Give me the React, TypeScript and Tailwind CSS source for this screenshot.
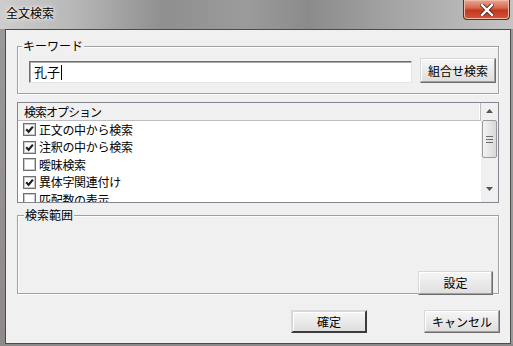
import React from 'react';

const font = { fontFamily: '"Noto Sans CJK JP", "Liberation Sans", sans-serif' };

const options = [
  { label: '正文の中から検索', checked: true },
  { label: '注釈の中から検索', checked: true },
  { label: '曖昧検索', checked: false },
  { label: '異体字関連付け', checked: true },
  { label: '匹配数の表示', checked: false },
];

function Check({ checked }: { checked: boolean }) {
  return (
    <div className="flex h-[13px] w-[13px] shrink-0 items-center justify-center border border-[#6f6f6f] bg-white shadow-[inset_0_0_0_1px_#c8c8c8]">
      {checked && (
        <svg width="9" height="9" viewBox="0 0 9 9">
          <path d="M1.2 4.3 L3.6 6.8 L7.9 1.6" fill="none" stroke="#222" strokeWidth="2.2" />
        </svg>
      )}
    </div>
  );
}

function Button({ label, wide = 'w-[76px]', strong = false, extra = '' }: { label: string; wide?: string; strong?: boolean; extra?: string }) {
  return (
    <div
      className={`flex h-[23px] ${wide} ${extra} items-center justify-center bg-gradient-to-b from-[#f6f6f6] to-[#dedede] text-[12px] text-black ${
        strong ? 'border-2 border-[#3c3c3c] border-t-[#d8d8d8] border-l-[#d8d8d8] shadow-[inset_1px_1px_0_#fff]' : 'border border-[#d8d8d8] border-r-[#6d6d6d] border-b-[#6d6d6d] shadow-[inset_-1px_-1px_0_#a0a0a0,inset_1px_1px_0_#fff]'
      }`}
    >
      {label}
    </div>
  );
}

export default function App() {
  return (
    <div className="flex h-[346px] w-[513px] flex-col bg-[#9c9a9a]" style={font}>
      {/* title bar */}
      <div className="relative flex h-[29px] shrink-0 items-start bg-[linear-gradient(to_right,#cdcdcd_0%,#b8b8b8_14%,#8f8f8f_32%,#9b9b9b_48%,#8b8b8b_60%,#a6a6a6_78%,#c4c4c4_100%)]">
        <span className="ml-[6px] mt-[5px] text-[12px] leading-[16px] text-black [text-shadow:0_0_6px_#fff,0_0_3px_#fff]">全文検索</span>
        <div className="ml-auto mr-[3px] flex h-[20px] w-[47px] items-center justify-center rounded-b-[4px] border border-t-0 border-[#5c2b22] bg-[linear-gradient(to_bottom,#e9a791_0%,#d66b52_40%,#c2381f_55%,#d3573b_100%)] shadow-[inset_0_0_0_1px_#f0b9a8]">
          <svg width="14" height="12" viewBox="0 0 14 12">
            <path d="M2 1 L12 11 M12 1 L2 11" stroke="#5a2a20" strokeWidth="4.2" strokeLinecap="square" />
            <path d="M2 1 L12 11 M12 1 L2 11" stroke="#fff" strokeWidth="2.4" strokeLinecap="square" />
          </svg>
        </div>
      </div>

      <div className="flex h-[315px] shrink-0">
        <div className="w-[5px] shrink-0 bg-gradient-to-b from-[#9a9898] to-[#8f8a8a]" />
        {/* client */}
        <div className="flex w-[506px] shrink-0 flex-col border border-[#4b4b4b] bg-[#f0f0f0] pl-[11px] pt-[16px]">
          {/* keyword group */}
          <div className="relative flex h-[48px] w-[482px] items-start border border-[#a0a0a0] shadow-[inset_1px_1px_0_#fff,1px_1px_0_#fff] pl-[11px] pt-[11px]">
            <span className="absolute -top-[9px] left-[4px] bg-[#f0f0f0] px-[1px] text-[12px] leading-[16px] text-black">キーワード</span>
            <div className="mt-[3px] flex h-[22px] w-[383px] items-center border border-[#6e6e6e] border-b-[#e3e3e3] border-r-[#e3e3e3] bg-white pl-[4px] shadow-[inset_1px_1px_0_#a9a9a9] text-[13px] text-black">
              孔子<span className="ml-[1px] h-[15px] w-[1px] bg-black" />
            </div>
            <Button label="組合せ検索" wide="w-[76px]" extra="ml-[8px] h-[25px]" />
          </div>

          {/* options list */}
          <div className="mt-[8px] flex h-[101px] w-[482px] border border-[#828790] bg-white">
            <div className="flex flex-1 flex-col overflow-hidden">
              <div className="flex h-[18px] shrink-0 items-center border-b border-r border-[#bdbdbd] bg-[#f0f0f0] pl-[6px] text-[12px] tracking-[-1px] text-black shadow-[inset_-1px_0_0_#fff]">
                検索オプション
              </div>
              {options.map((o) => (
                <div key={o.label} className="flex h-[17.5px] shrink-0 items-center gap-[3px] pl-[5px] text-[12px] tracking-[-0.3px] text-black">
                  <Check checked={o.checked} />
                  <span className="leading-[14px]">{o.label}</span>
                </div>
              ))}
            </div>
            {/* scrollbar */}
            <div className="flex w-[17px] shrink-0 flex-col items-center bg-[#f0f0f0] pt-[6px]">
              <svg width="7" height="4" viewBox="0 0 7 4">
                <path d="M0 4 L3.5 0 L7 4 Z" fill="#555" />
              </svg>
              <div className="mt-[7px] flex h-[38px] w-[15px] flex-col items-center justify-center gap-[2px] rounded-[2px] border border-[#9a9a9a] bg-gradient-to-r from-[#f3f3f3] to-[#d9d9d9]">
                <div className="h-[1px] w-[7px] bg-[#6a6a6a]" />
                <div className="h-[1px] w-[7px] bg-[#6a6a6a]" />
                <div className="h-[1px] w-[7px] bg-[#6a6a6a]" />
              </div>
              <svg className="mt-[29px]" width="7" height="4" viewBox="0 0 7 4">
                <path d="M0 0 L3.5 4 L7 0 Z" fill="#555" />
              </svg>
            </div>
          </div>

          {/* range group */}
          <div className="relative mt-[12px] flex h-[79px] w-[482px] items-end justify-end border border-[#a0a0a0] pr-[5px] shadow-[inset_1px_1px_0_#fff,1px_1px_0_#fff]">
            <span className="absolute -top-[9px] left-[6px] bg-[#f0f0f0] px-[1px] text-[12px] leading-[16px] text-black">検索範囲</span>
            <Button label="設定" wide="w-[75px]" extra="-mb-[2px] h-[24px]" />
          </div>

          {/* footer buttons */}
          <div className="mt-[16px] flex w-[483px] justify-end gap-[57px]">
            <Button label="確定" strong />
            <Button label="キャンセル" />
          </div>
        </div>
        <div className="w-[2px] shrink-0 bg-[#9a9a9a]" />
      </div>
      <div className="h-[2px] shrink-0 bg-[#8e8a8a]" />
    </div>
  );
}
